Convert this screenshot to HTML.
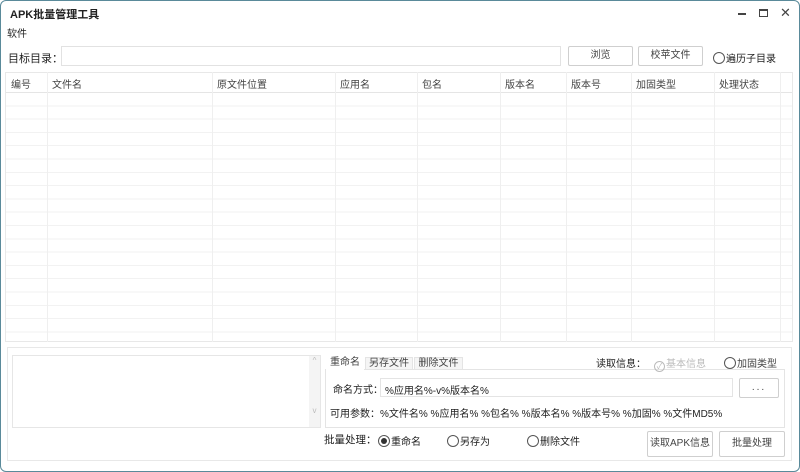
<!DOCTYPE html>
<html><head><meta charset="utf-8"><style>
*{box-sizing:border-box;margin:0;padding:0}
body{width:800px;height:472px;overflow:hidden;background:#fff;font-family:"Liberation Sans","Noto Sans CJK SC",sans-serif;font-size:10px;color:#222;position:relative}
.a{position:absolute}
.btn{position:absolute;border:1px solid #cfcfcf;border-radius:2px;background:#fff;text-align:center;color:#444}
.rad{display:inline-block;width:11px;height:11px;border:1px solid #555;border-radius:50%;vertical-align:-2px;margin-right:1px;position:relative}
.col{position:absolute;top:0;bottom:0;border-left:1px solid #efefef}
.h{position:absolute;top:4px;color:#444}
</style></head><body>
<div class="a" style="left:0;top:0;width:800px;height:472px;border:1px solid #5a8a9a;border-radius:6px"></div>
<div class="a" style="left:10px;top:6px;font-weight:bold;font-size:11px">APK批量管理工具</div>
<div class="a" style="left:738px;top:13px;width:8px;height:2px;background:#444"></div>
<div class="a" style="left:759px;top:9px;width:9px;height:8px;border:1px solid #444;border-top-width:2px"></div>
<div class="a" style="left:780px;top:5px;font-size:13px;color:#444">✕</div>
<div class="a" style="left:7px;top:25px">软件</div>
<div class="a" style="left:8px;top:50px;font-size:11px">目标目录：</div>
<div class="a" style="left:61px;top:46px;width:500px;height:20px;border:1px solid #e2e2e2"></div>
<div class="btn" style="left:568px;top:46px;width:65px;height:20px;line-height:18px">浏览</div>
<div class="btn" style="left:638px;top:46px;width:65px;height:20px;line-height:18px">校苹文件</div>
<div class="a" style="left:713px;top:50px"><span class="rad" style="width:12px;height:12px"></span>遍历子目录</div>
<div class="a" style="left:5px;top:72px;width:788px;height:270px;border:1px solid #e8e8e8;background:repeating-linear-gradient(#fff 0,#fff 12.3px,#f2f2f2 12.3px,#f2f2f2 13.3px);background-position:0 20px"></div>
<div class="a" style="left:6px;top:73px;width:786px;height:20px;background:#fff;border-bottom:1px solid #e5e5e5"></div>
<div class="a" style="left:5px;top:72px;width:788px;height:270px">
<div class="col" style="left:42px"></div><div class="col" style="left:207px"></div><div class="col" style="left:330px"></div><div class="col" style="left:412px"></div><div class="col" style="left:495px"></div><div class="col" style="left:561px"></div><div class="col" style="left:626px"></div><div class="col" style="left:709px"></div><div class="col" style="left:775px"></div>
<span class="h" style="left:6px">编号</span><span class="h" style="left:47px">文件名</span><span class="h" style="left:212px">原文件位置</span><span class="h" style="left:335px">应用名</span><span class="h" style="left:417px">包名</span><span class="h" style="left:500px">版本名</span><span class="h" style="left:566px">版本号</span><span class="h" style="left:631px">加固类型</span><span class="h" style="left:714px">处理状态</span>
</div>
<div class="a" style="left:7px;top:347px;width:785px;height:114px;border:1px solid #e8e8e8;background:#fff"></div>
<div class="a" style="left:12px;top:355px;width:309px;height:73px;border:1px solid #e6e6e6"></div>
<div class="a" style="left:309px;top:356px;width:11px;height:71px;background:#f4f4f4;color:#bbb;font-size:8px;text-align:center;line-height:10px">^<br><br><br><br><br>v</div>
<div class="a" style="left:325px;top:369px;width:460px;height:59px;border:1px solid #e4e4e4"></div>
<div class="a" style="left:326px;top:356px;width:38px;height:14px;background:#fff;text-align:center;line-height:14px;color:#444">重命名</div>
<div class="a" style="left:365px;top:357px;width:48px;height:13px;border:1px solid #e4e4e4;background:#f5f5f5;text-align:center;line-height:12px;color:#444">另存文件</div>
<div class="a" style="left:414px;top:357px;width:49px;height:13px;border:1px solid #e4e4e4;background:#f5f5f5;text-align:center;line-height:12px;color:#444">删除文件</div>
<div class="a" style="left:596px;top:355px">读取信息：</div>
<div class="a" style="left:654px;top:355px;color:#bbb"><span class="rad" style="border-color:#bbb;font-size:8px;line-height:9px;text-align:center">✓</span>基本信息</div>
<div class="a" style="left:724px;top:355px;color:#444"><span class="rad" style="width:12px;height:12px"></span>加固类型</div>
<div class="a" style="left:333px;top:381px">命名方式：</div>
<div class="a" style="left:380px;top:378px;width:353px;height:19px;border:1px solid #e4e4e4;padding:3px 4px">%应用名%-v%版本名%</div>
<div class="btn" style="left:739px;top:378px;width:40px;height:20px;line-height:18px;letter-spacing:2px">...</div>
<div class="a" style="left:330px;top:405px">可用参数：%文件名% %应用名% %包名% %版本名% %版本号% %加固% %文件MD5%</div>
<div class="a" style="left:324px;top:432px;font-size:10.5px">批量处理：</div>
<div class="a" style="left:378px;top:433px"><span class="rad" style="width:12px;height:12px"><span style="position:absolute;left:2px;top:2px;width:6px;height:6px;border-radius:50%;background:#333"></span></span>重命名</div>
<div class="a" style="left:447px;top:433px"><span class="rad" style="width:12px;height:12px"></span>另存为</div>
<div class="a" style="left:527px;top:433px"><span class="rad" style="width:12px;height:12px"></span>删除文件</div>
<div class="btn" style="left:647px;top:431px;width:66px;height:26px;line-height:24px">读取APK信息</div>
<div class="btn" style="left:719px;top:431px;width:66px;height:26px;line-height:24px">批量处理</div>
</body></html>
